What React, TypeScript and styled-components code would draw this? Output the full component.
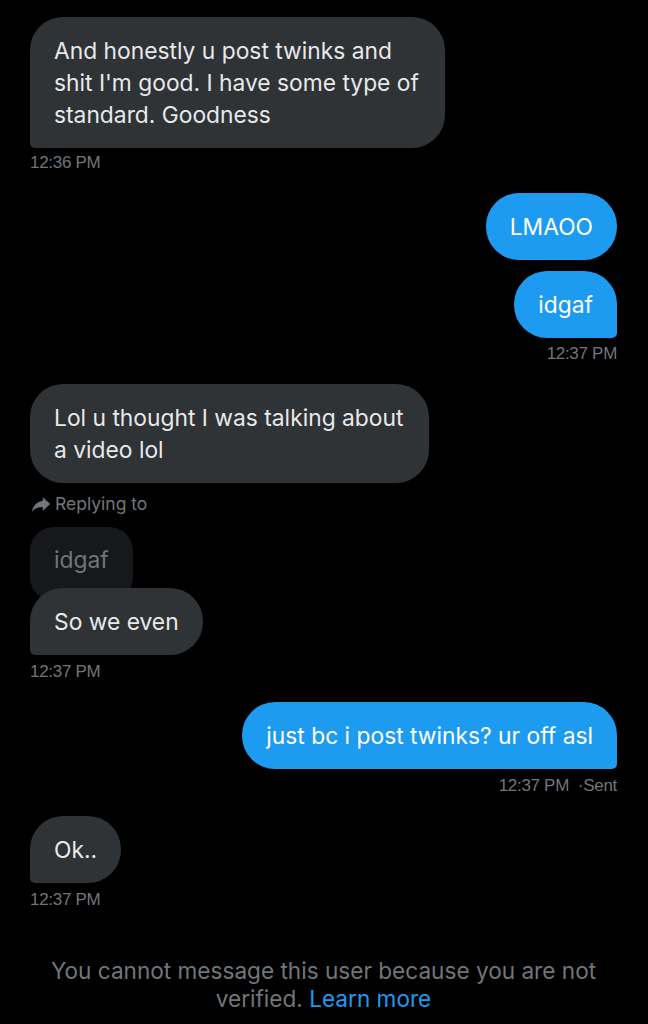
import styled, { createGlobalStyle } from "styled-components"

const GlobalStyle = createGlobalStyle`
   html, body {
      margin: 0;
      padding: 0;
      background: #000;
   }
   body {
      font-family: "Inter", "Liberation Sans", sans-serif;
      -webkit-font-smoothing: antialiased;
   }
`

const Thread = styled.div`
   box-sizing: border-box;
   width: 648px;
   min-height: 1024px;
   padding: 17px 31px 0 30px;
   display: flex;
   flex-direction: column;
   background: #000;
`

const Group = styled.div<{ $mine?: boolean; $first?: boolean }>`
   display: flex;
   flex-direction: column;
   align-items: ${p => (p.$mine ? "flex-end" : "flex-start")};
   gap: 11px;
   margin-top: ${p => (p.$first ? 0 : 20)}px;
`

const Bubble = styled.div<{ $mine?: boolean; $tail?: boolean; $wrap?: boolean }>`
   position: relative;
   box-sizing: border-box;
   padding: 17.5px ${p => (p.$wrap ? "26px" : "24px")} 17.5px 24px;
   font-size: 22.8px;
   line-height: 32px;
   white-space: nowrap;
   background: ${p => (p.$mine ? "#1d9bf0" : "#2f3336")};
   color: ${p => (p.$mine ? "#fff" : "#e7e9ea")};
   border-radius: 33px;
   ${p => p.$tail && (p.$mine ? "border-bottom-right-radius: 5px;" : "border-bottom-left-radius: 5px;")}
`

const Stack = styled.div`
   display: flex;
   flex-direction: column;
   align-items: flex-start;
`

const Quoted = styled.div`
   padding: 17px 24px 25px;
   font-size: 22.8px;
   line-height: 32px;
   color: #71767b;
   background: #16181c;
   border-radius: 24px;
`

const ReplyBubble = styled(Bubble)`
   margin-top: -13px;
`

const Replying = styled.div`
   display: flex;
   align-items: center;
   gap: 3px;
   margin-top: -1px;
   margin-bottom: 12px;
   font-size: 17.5px;
   line-height: 20px;
   color: #71767b;
`

// inside a Group the 11px gap comes first, so the offset is relative to that
const Stamp = styled.div<{ $offset?: number }>`
   margin-top: ${p => p.$offset ?? 7}px;
   font-family: "Liberation Sans", Arial, sans-serif;
   font-size: 17px;
   line-height: 20px;
   letter-spacing: -0.3px;
   color: #71767b;
`

const Notice = styled.p`
   margin: 47px 0 0;
   padding: 0 6px;
   text-align: center;
   font-size: 22.6px;
   line-height: 28px;
   color: #71767b;
`

const Link = styled.a`
   color: #1d9bf0;
   text-decoration: none;
`

function ReplyArrow() {
   return (
      <svg width="22" height="22" viewBox="0 0 24 24" fill="#71767b">
         <path d="M14 8.5V4.5l8 7.5-8 7.5v-4.2c-5.5 0-9.2 1.6-12 5.4C3 15.3 6.6 9.6 14 8.5z" />
      </svg>
   )
}

function Lines({ lines }: { lines: string[] }) {
   return <>{lines.map((l, i) => <div key={i}>{l}</div>)}</>
}

export default function App() {
   return <>
      <GlobalStyle />
      <Thread>
         <Group $first>
            <Bubble $tail $wrap>
               <Lines lines={["And honestly u post twinks and", "shit I'm good. I have some type of", "standard. Goodness"]} />
            </Bubble>
            <Stamp $offset={-6}>12:36 PM</Stamp>
         </Group>

         <Group $mine>
            <Bubble $mine>LMAOO</Bubble>
            <Bubble $mine $tail>idgaf</Bubble>
            <Stamp $offset={-5}>12:37 PM</Stamp>
         </Group>

         <Group>
            <Bubble $wrap>
               <Lines lines={["Lol u thought I was talking about", "a video lol"]} />
            </Bubble>
            <Stack>
               <Replying><ReplyArrow />Replying to</Replying>
               <Quoted>idgaf</Quoted>
               <ReplyBubble $tail>So we even</ReplyBubble>
               <Stamp>12:37 PM</Stamp>
            </Stack>
         </Group>

         <Group $mine>
            <Bubble $mine $tail>just bc i post twinks? ur off asl</Bubble>
            <Stamp $offset={-4}>12:37 PM&nbsp; ·Sent</Stamp>
         </Group>

         <Group>
            <Bubble $tail>Ok..</Bubble>
            <Stamp $offset={-4}>12:37 PM</Stamp>
         </Group>

         <Notice>
            You cannot message this user because you are not verified. <Link href="#">Learn more</Link>
         </Notice>
      </Thread>
   </>
}
